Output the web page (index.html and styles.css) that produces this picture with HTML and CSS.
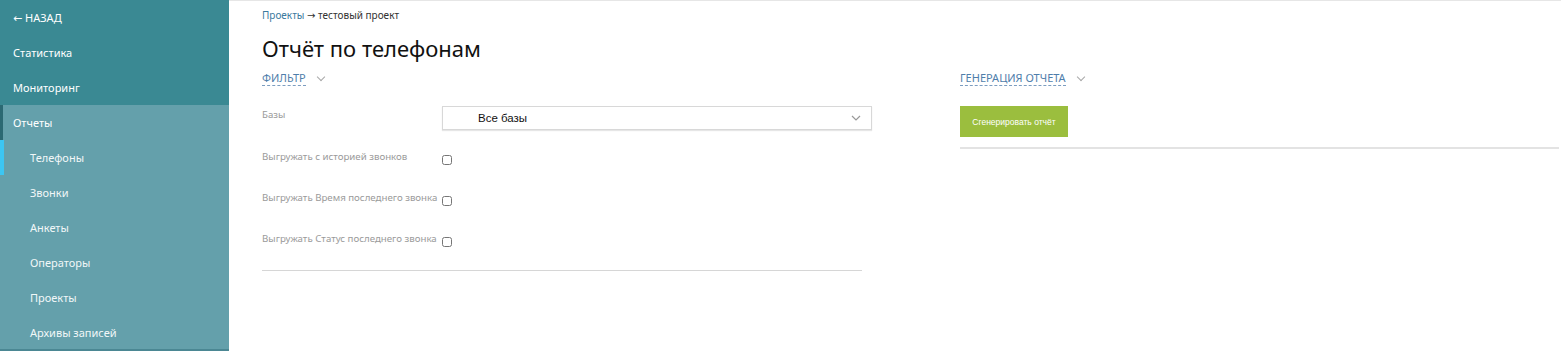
FILE: index.html
```html
<!DOCTYPE html>
<html>
  <head>
    <meta charset="utf-8" />
    <title>Отчёт по телефонам</title>
    <link rel="stylesheet" href="styles.css">
  </head>
  <body>
    <div class="layout">
      <ul class="sidebar">
        <li class="top"><span class="arrow">←</span> НАЗАД</li>
        <li class="top">Статистика</li>
        <li class="top">Мониторинг</li>
        <li class="group">Отчеты</li>
        <li class="sub active">Телефоны</li>
        <li class="sub">Звонки</li>
        <li class="sub">Анкеты</li>
        <li class="sub">Операторы</li>
        <li class="sub">Проекты</li>
        <li class="sub">Архивы записей</li>
      </ul>

      <div class="content">
        <div class="crumbs"><a href="#">Проекты</a> <span class="arrow">→</span> тестовый проект</div>
        <h1>Отчёт по телефонам</h1>

        <div class="columns">
          <div class="filter">
            <div class="toggle"><span>Фильтр</span><i class="chev"></i></div>

            <div class="row">
              <label>Базы</label>
              <div class="select">
                <span>Все базы</span>
                <svg width="10" height="6" viewBox="0 0 10 6"><path d="M1 1l4 4 4-4" fill="none" stroke="#999" stroke-width="1.2"/></svg>
              </div>
            </div>
            <div class="row check">
              <label>Выгружать с историей звонков</label>
              <input type="checkbox" />
            </div>
            <div class="row check">
              <label>Выгружать Время последнего звонка</label>
              <input type="checkbox" />
            </div>
            <div class="row check">
              <label>Выгружать Статус последнего звонка</label>
              <input type="checkbox" />
            </div>
            <hr />
          </div>

          <div class="generate">
            <div class="toggle"><span>Генерация отчета</span><i class="chev"></i></div>
            <button class="btn">Сгенерировать отчёт</button>
            <hr />
          </div>
        </div>
      </div>
    </div>
  </body>
</html>
```

FILE: styles.css
```css
* {
  margin: 0;
  padding: 0;
  box-sizing: border-box;
}
body {
  font-family: "Noto Sans", "Open Sans", sans-serif;
  background: #fff;
  color: #222;
}
ul li {
  list-style: none;
}
.arrow {
  font-family: "DejaVu Sans", sans-serif;
}
.layout {
  display: flex;
  height: 351px;
}
.sidebar {
  width: 229px;
  flex-shrink: 0;
  background: #64a0ab;
  border-bottom: 2px solid #4b8793;
}
.sidebar li {
  height: 35px;
  line-height: 35px;
  font-size: 11px;
  color: #fff;
  padding-left: 13px;
}
.sidebar .top {
  background: #3a8993;
}
.sidebar .group {
  border-left: 3px solid #2b6973;
  padding-left: 10px;
}
.sidebar .sub {
  padding-left: 30px;
  color: #f1f7f8;
}
.sidebar .active {
  border-left: 4px solid #3cc6f2;
  padding-left: 26px;
}
.content {
  flex: 1;
  padding: 7px 2px 0 33px;
  border-top: 1px solid #e6e6e6;
}
.crumbs {
  font-size: 10px;
  color: #333;
  height: 16px;
}
.crumbs a {
  color: #3c7a9e;
  text-decoration: none;
}
h1 {
  font-size: 22px;
  font-weight: 400;
  color: #111;
  margin-top: 9px;
  height: 35px;
}
.columns {
  display: flex;
}
.filter {
  width: 611px;
  margin-right: 87px;
}
.generate {
  flex: 1;
}
.toggle {
  height: 38px;
  display: flex;
  align-items: flex-start;
  padding-top: 3px;
}
.toggle span {
  font-size: 11px;
  text-transform: uppercase;
  color: #4f7eab;
  border-bottom: 1px dashed #7c9dc0;
  line-height: 14px;
}
.chev {
  width: 6px;
  height: 6px;
  border-right: 1.5px solid #a8a8a8;
  border-bottom: 1.5px solid #a8a8a8;
  transform: rotate(45deg);
  margin: 3px 0 0 12px;
}
.row {
  display: flex;
  align-items: flex-start;
  height: 41px;
}
.row label {
  width: 180px;
  font-size: 9.7px;
  color: #9a9a9a;
  padding-top: 2px;
}
.select {
  width: 430px;
  height: 24px;
  border: 1px solid #d8d8d8;
  box-shadow: 0 1px 1px #e6e6e6;
  display: flex;
  align-items: center;
  justify-content: space-between;
  padding: 0 10px 0 35px;
  font-family: "Liberation Sans", Arial, sans-serif;
  font-size: 11.5px;
  color: #111;
}
.check label {
  padding-top: 3px;
}
.check input {
  width: 10px;
  height: 10px;
  margin-top: 8px;
}
hr {
  border: 0;
  border-top: 1px solid #d6d6d6;
}
.filter hr {
  margin-top: 0;
  width: 600px;
}
.btn {
  width: 108px;
  height: 31px;
  background: #9bbe3e;
  border: 0;
  color: #fff;
  font-family: "Liberation Sans", Arial, sans-serif;
  font-size: 8.5px;
  display: block;
}
.generate hr {
  margin-top: 10px;
  border-top: 2px solid #e3e3e3;
}
```
